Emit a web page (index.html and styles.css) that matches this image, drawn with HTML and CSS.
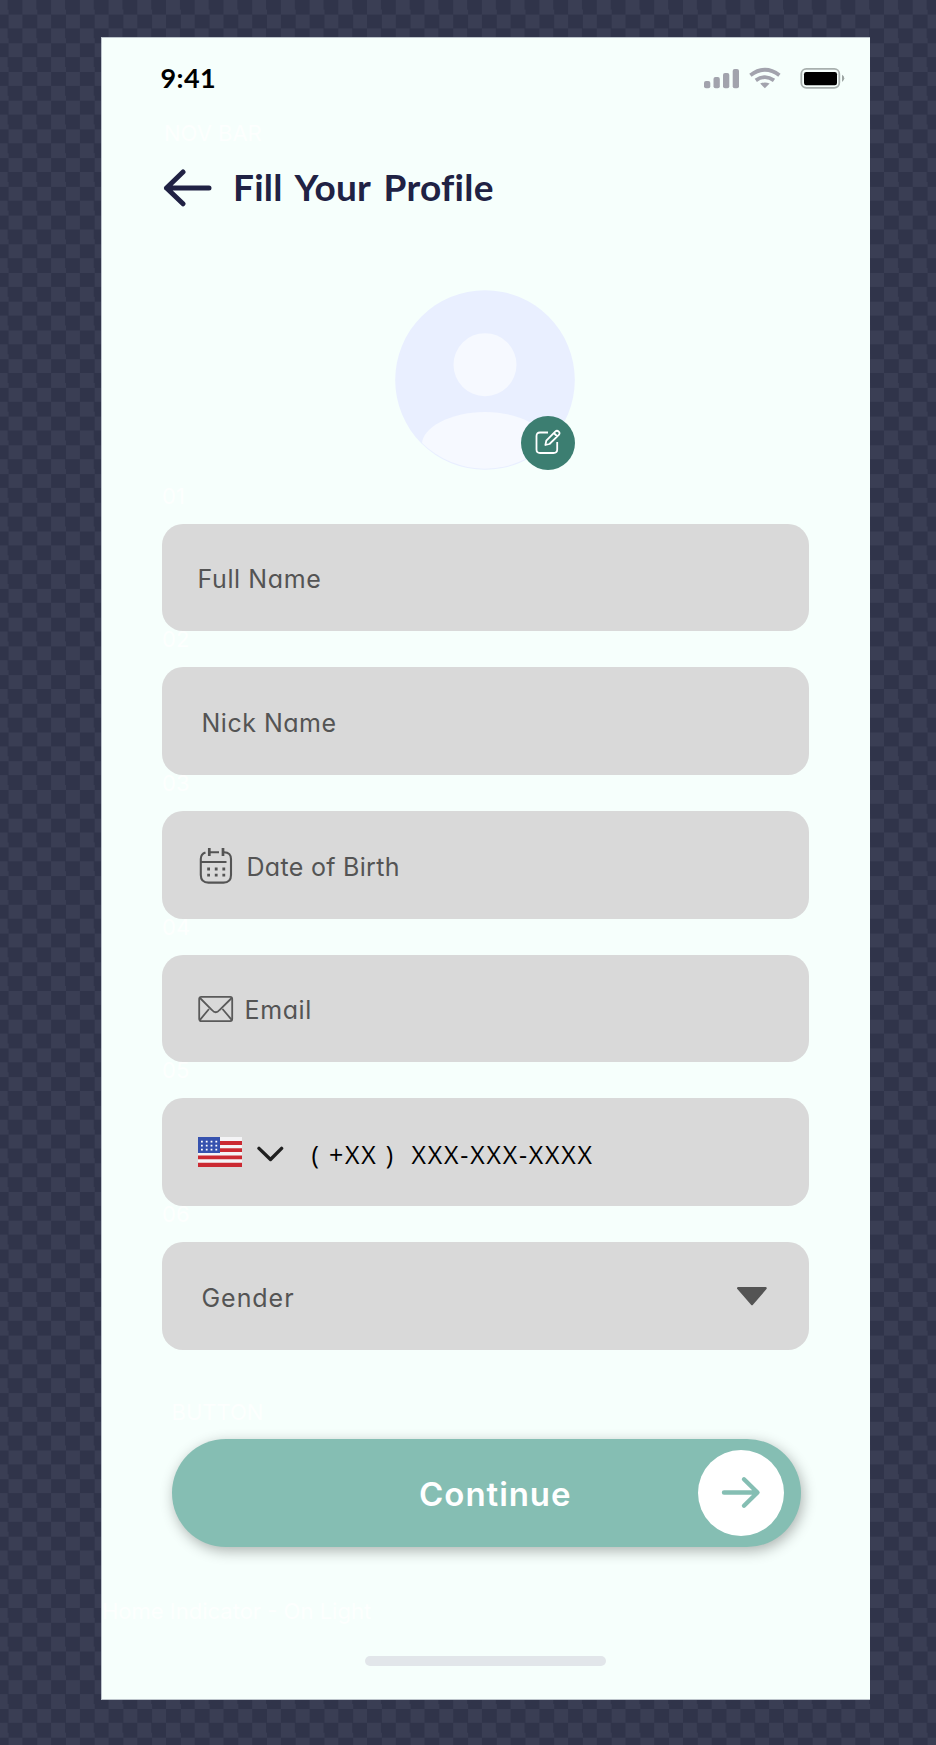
FILE: index.html
```html
<!DOCTYPE html>
<html lang="en">
<head>
<meta charset="utf-8">
<title>Fill Your Profile</title>
<link rel="stylesheet" href="styles.css">
</head>
<body>
<main class="screen">
  <header class="status">
    <span class="time">9:41</span>
    <svg class="signals" width="142" height="24" viewBox="0 0 142 24">
      <g fill="#a2a3ad">
        <rect x="0" y="14" width="6.3" height="7.3" rx="2"/>
        <rect x="9.5" y="10" width="6.3" height="11.3" rx="2"/>
        <rect x="19" y="6" width="6.3" height="15.3" rx="2"/>
        <rect x="28.7" y="2" width="6.3" height="19.3" rx="2"/>
        <path d="M56.2 16.6Q60.8 14.4 65.6 16.6L60.9 21.3Z"/>
      </g>
      <g fill="none" stroke="#a2a3ad" stroke-width="3.8">
        <path d="M46.4 8.2Q60.9-2.7 75.4 8.2"/>
        <path d="M51.8 13.4Q60.9 6.8 70 13.4"/>
      </g>
      <rect x="97.3" y="1.8" width="38" height="19" rx="5" fill="none" stroke="#a8b0ae" stroke-width="1.8"/>
      <rect x="100" y="5" width="33" height="13.2" rx="2.2"/>
      <path d="M138 7.7Q140.3 9 140.3 11.3T138 15Z" fill="#9da5a3"/>
    </svg>
  </header>
  <div class="ghost ghost-nav">NOV BAR</div>
  <div class="heading">
    <svg width="50" height="38" viewBox="0 0 50 38" fill="none" stroke="#202244" stroke-width="5" stroke-linecap="round" stroke-linejoin="round"><path d="M20 3L3.5 19L20 34.8M3.5 19H46"/></svg>
    <h1 class="title">Fill Your Profile</h1>
  </div>
  <div class="avatar">
    <svg width="180" height="180" viewBox="0 0 180 180">
      <defs><clipPath id="face"><circle cx="90" cy="89" r="89.7"/></clipPath></defs>
      <circle cx="90" cy="90" r="89.8" fill="#e9efff"/>
      <g clip-path="url(#face)" fill="#f6f9ff"><circle cx="90" cy="74.7" r="31.5"/><path d="M27 154C27 138 55 122 90 122S153 138 153 154C140 169 116 179 90 179S41 169 27 154Z"/></g>
    </svg>
    <span class="edit">
      <svg width="26" height="26" viewBox="0 0 26 26" fill="none" stroke="#fff" stroke-width="1.8" stroke-linejoin="round"><path d="M13 3.5H5Q1.5 3.5 1.5 7V20.5Q1.5 24 5 24H18.5Q22.2 24 22.2 20.5V13"/><path d="M20.2 2.6Q22 1 23.7 2.6T23.8 5.8L14.5 15L10.4 16L11.3 11.6ZM18.8 4L22.4 7.5"/></svg>
    </span>
  </div>
  <form class="form">
    <div class="row"><span class="ghost num">01</span><div class="field"><span class="text full">Full Name</span></div></div>
    <div class="row"><span class="ghost num">02</span><div class="field nick"><span class="text nickname">Nick Name</span></div></div>
    <div class="row"><span class="ghost num">03</span><div class="field">
      <svg class="calendar" width="34" height="38" viewBox="0 0 34 38" fill="none" stroke="#545454" stroke-width="2.1"><path d="M6.5 5.4C3 6.5 1.8 9 1.8 12V28Q1.8 35.6 9.5 35.6H24.5Q32 35.6 32 28V12C32 8 30 5.2 25 5.2M10 5.2H20M2 15H27.5"/><path stroke-width="2.7" d="M10.3 1V9M24 1V9"/><path stroke-width="2.8" stroke-dasharray="2.8 4.8" d="M8.2 22H27.2M8.2 28.2H27.2"/></svg>
      <span class="text birth">Date of Birth</span></div></div>
    <div class="row"><span class="ghost num">04</span><div class="field">
      <svg class="mail" width="36" height="28" viewBox="0 0 36 28" fill="none" stroke="#5a5a5a" stroke-width="1.8"><rect x="1.2" y="1.8" width="33" height="24.3" rx="2"/><path d="M2 3L14 15Q17.7 19.5 21.5 15L33.7 3M11 14L2 24.8M24.5 14L33.7 24.8"/></svg>
      <span class="text email">Email</span></div></div>
    <div class="row"><span class="ghost num">05</span><div class="field">
      <svg class="flag" width="44" height="30" viewBox="0 0 44 30"><rect width="44" height="30" fill="#f4f4f6"/><path fill="#cb2a32" d="M0 4h44v4H0zM0 11.2h44v3.8H0zM0 18.4h44v3.8H0zM0 25.8h44V30H0z"/><rect width="22" height="16" fill="#3652ae"/><path stroke="#fff" stroke-width="1.8" stroke-dasharray="1.8 3" d="M3 4.6H20M3 8.6H20M3 12.6H20"/></svg>
      <svg class="chevron" width="28" height="18" viewBox="0 0 28 18" fill="none" stroke="#202020" stroke-width="3.4" stroke-linecap="round" stroke-linejoin="round"><path d="M3 4.4L14.5 15.5L25.6 4.4"/></svg>
      <span class="phone">( +XX )&nbsp; XXX-XXX-XXXX</span></div></div>
    <div class="row"><span class="ghost num">06</span><div class="field nick"><span class="text gender">Gender</span>
      <svg class="caret" width="32" height="20" viewBox="0 0 32 20"><path d="M2.3 2.2H29.5L16 18Z" fill="#545454" stroke="#545454" stroke-width="2.5" stroke-linejoin="round"/></svg></div></div>
  </form>
  <div class="ghost ghost-button">BUTTON</div>
  <button class="continue">
    <span class="label">Continue</span>
    <span class="go"><svg width="42" height="36" viewBox="0 0 42 36" fill="none" stroke="#85beb3" stroke-width="4.4" stroke-linecap="round" stroke-linejoin="round"><path d="M4 17.5H37M24 4.3L37.5 17.5L24 30.7"/></svg></span>
  </button>
  <div class="ghost ghost-home">Home Indicator - On Light</div>
  <div class="indicator"></div>
</main>
</body>
</html>
```
FILE: styles.css
```css
* { box-sizing: border-box; }
body {
  margin: 0;
  height: 1745px;
  padding: 37px 66px 0 101px;
  overflow: hidden;
  background: repeating-conic-gradient(#30344a 0 25%, #3a3e54 0 50%) -6.3px -0.3px / 28.73px 28.73px;
  font-family: Inter, sans-serif;
}
svg { display: block; flex: none; }
.screen {
  display: flex;
  flex-direction: column;
  width: 769px;
  height: 1663px;
  background: #f6fffc;
  border: 1px solid #bcc4cb;
  border-right-width: 0;
}
.status {
  display: flex;
  justify-content: space-between;
  align-items: center;
  height: 80px;
  padding: 0 24px 0 58.5px;
}
.signals { margin-top: 2px; }
.time { font: 700 27px/32px Lato, sans-serif; letter-spacing: .4px; color: #000; white-space: nowrap; }
.ghost { color: #fdfffe; font-size: 22px; line-height: 26px; white-space: nowrap; }
.ghost-nav { margin: 2px 0 0 62px; }
.heading { display: flex; align-items: center; height: 84px; padding-left: 61px; gap: 20px; }
.title { margin: -3px 0 0; font: 700 37px/44px Lato, sans-serif; letter-spacing: .25px; word-spacing: 4px; font-variant-ligatures: none; color: #202244; white-space: nowrap; }
.avatar { position: relative; width: 180px; height: 180px; margin: 60px 0 0 293px; }
.edit {
  position: absolute;
  right: 0;
  bottom: 0;
  display: grid;
  place-items: center;
  width: 54px;
  height: 54px;
  padding: 0 1px 2px 0;
  border-radius: 50%;
  background: #3c7e71;
}
.form { display: flex; flex-direction: column; margin: 17.5px 61.5px 0 60px; }
.row { display: flex; flex-direction: column; }
.num { height: 36px; line-height: 17px; }
.field {
  display: flex;
  align-items: center;
  height: 107.7px;
  padding-left: 35.5px;
  border-radius: 21px;
  background: #d9d9d9;
}
.nick { padding-left: 39.5px; }
.text { font-size: 25px; line-height: 36px; letter-spacing: .6px; color: #545454; font-feature-settings: "cv11"; padding-top: 4px; white-space: nowrap; }
.nickname { letter-spacing: .5px; }
.birth { letter-spacing: .3px; }
.gender { letter-spacing: .95px; }
.calendar { margin: 2px 14px 0 1px; }
.mail { margin: 2px 11px 0 0; }
.flag { margin-right: 14px; }
.chevron { margin: 2px 28px 0 0; }
.phone { padding-top: 3px; font: 400 25px/36px "Open Sans", sans-serif; letter-spacing: 1.8px; color: #000; white-space: nowrap; }
.caret { margin-left: auto; margin-right: 40.5px; }
.ghost-button { margin: 49.5px 0 0 69.5px; }
.continue {
  display: flex;
  align-items: center;
  justify-content: flex-end;
  width: 629px;
  height: 108px;
  margin: 13.5px 0 0 69.5px;
  padding: 0 17px 0 0;
  border: 0;
  border-radius: 54px;
  background: #85beb3;
  box-shadow: 2px 4px 14px rgba(0, 0, 0, .3);
}
.label { margin-right: 126px; padding-top: 3px; color: #fff; font: 600 33px/44px Inter, sans-serif; letter-spacing: .95px; white-space: nowrap; }
.go { display: grid; place-items: center; width: 86px; height: 86px; border-radius: 50%; background: #fff; }
.ghost-home { margin: 51px 0 0 0; }
.indicator { width: 241px; height: 10px; margin: 32px 0 0 263px; border-radius: 5px; background: #e2e6ea; }
```
